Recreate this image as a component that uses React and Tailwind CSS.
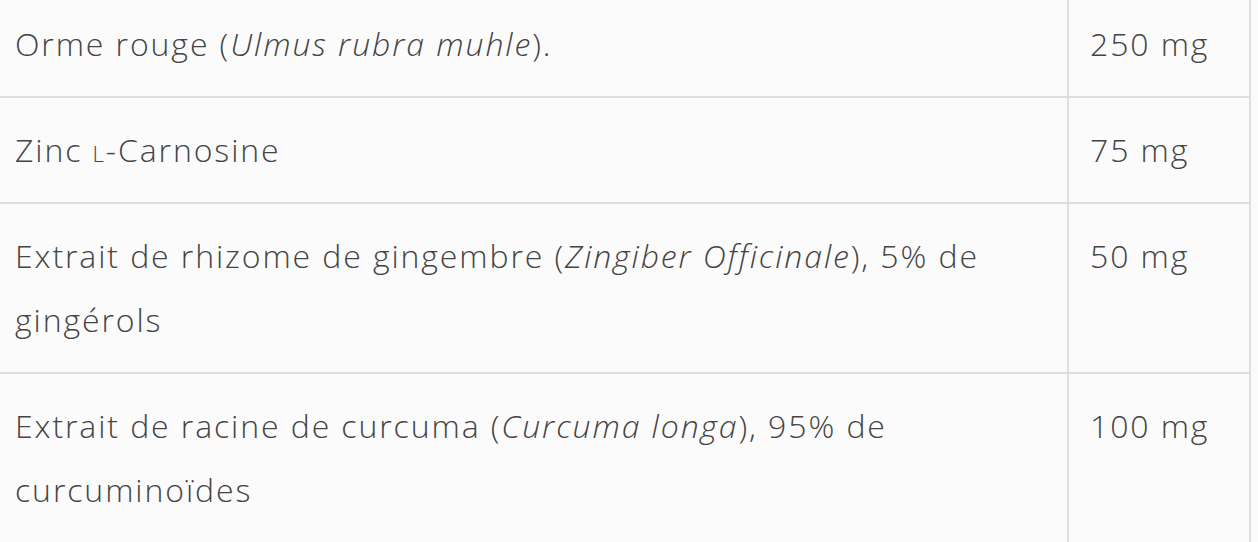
import React from 'react'

const rows = [
  {
    name: (
      <>
        Orme rouge (<i>Ulmus rubra muhle</i>).
      </>
    ),
    dose: '250 mg',
  },
  {
    name: (
      <>
        Zinc <span className="[font-variant-caps:small-caps]">l</span>-Carnosine
      </>
    ),
    dose: '75 mg',
  },
  {
    name: (
      <>
        Extrait de rhizome de gingembre (<i>Zingiber Officinale</i>), 5% de gingérols
      </>
    ),
    dose: '50 mg',
  },
  {
    name: (
      <>
        Extrait de racine de curcuma (<i>Curcuma longa</i>), 95% de curcuminoïdes
      </>
    ),
    dose: '100 mg',
  },
]

export default function App() {
  return (
    <div className="h-[542px] w-[1258px] overflow-hidden bg-[#fbfbfb]">
      <div className="-ml-[7px] -mt-[8px] w-[1258px] font-['Open_Sans',sans-serif] text-[32px] font-light leading-[64px] tracking-[1.9px] text-[#444444]">
        {rows.map((row, i) => (
          <div key={i} className="flex border-b-2 border-[#dedede]">
            <div className="w-[1076px] border-r-2 border-[#dedede] py-[20px] pl-[22px] pr-[60px]">
              {row.name}
            </div>
            <div className="w-[182px] border-r-2 border-[#dedede] py-[20px] pl-[21px]">
              {row.dose}
            </div>
          </div>
        ))}
      </div>
    </div>
  )
}
